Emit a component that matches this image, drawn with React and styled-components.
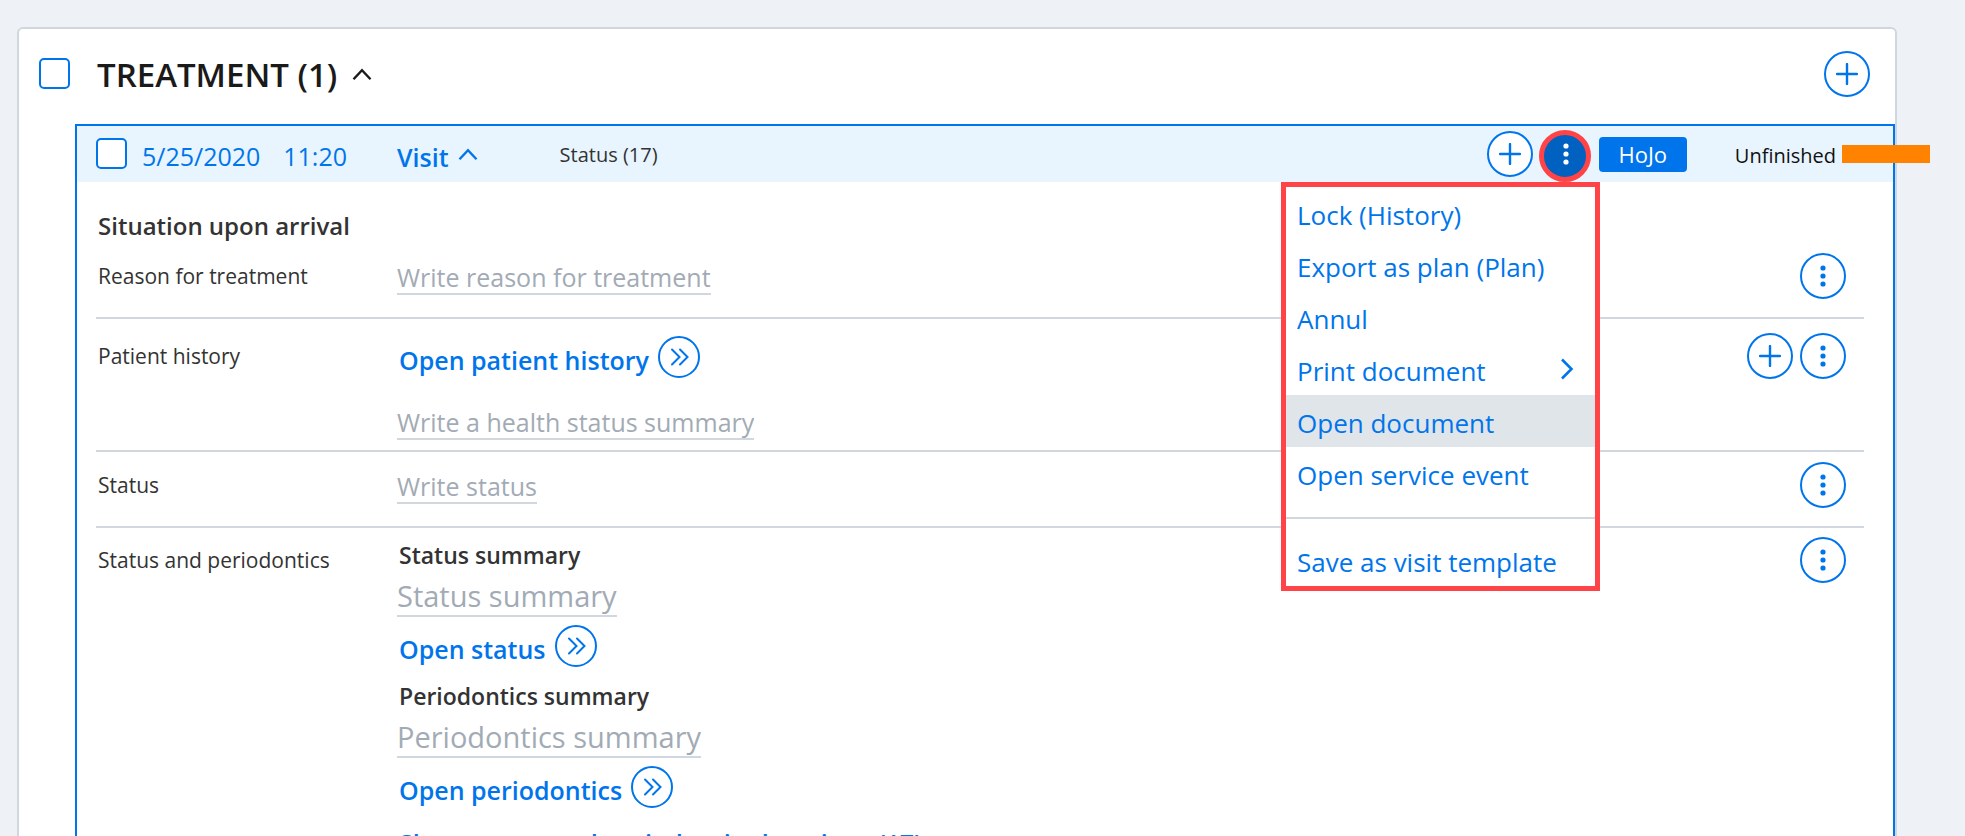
import styled, { createGlobalStyle } from 'styled-components';

const GlobalStyle = createGlobalStyle`
  * {
    box-sizing: border-box;
  }

  body {
    margin: 0;
    background: #eef1f6;
    color: #333;
    font-family: 'Segoe UI', 'Open Sans', 'Noto Sans', sans-serif;
    overflow: hidden;
  }

  button,
  input {
    font-family: inherit;
  }
`;

const Page = styled.main`
  height: 100vh;
  padding: 27px 68px 0 17px;
  overflow: hidden;
`;

const Card = styled.section`
  min-height: 900px;
  background: #fff;
  border: 2px solid #d1d7de;
  border-radius: 6px;
`;

const CardHeader = styled.header`
  display: flex;
  align-items: center;
  height: 95px;
  padding: 0 25px 5px 20px;
`;

const Checkbox = styled.input.attrs({ type: 'checkbox' })`
  appearance: none;
  flex: none;
  width: 31px;
  height: 31px;
  margin: 0 0 2px;
  border: 2px solid #0075eb;
  border-radius: 5px;
  background: #fff;
`;

const CardTitle = styled.h1`
  margin: 0 15px 0 27px;
  padding-top: 2px;
  color: #1a1a1a;
  font-size: 33px;
  font-weight: 600;
  line-height: 40px;
`;

const ToggleButton = styled.button`
  display: flex;
  align-items: center;
  gap: 9px;
  flex: none;
  padding: 0;
  border: 0;
  background: none;
  color: ${(props) => props.$color || '#0075eb'};
  font-size: 25px;
  font-weight: 600;
  line-height: 34px;
  cursor: pointer;
`;

const ToggleText = styled.span`
  padding-top: 6px;
`;

const Spacer = styled.div`
  flex: 1;
`;

const RoundButton = styled.button`
  display: flex;
  align-items: center;
  justify-content: center;
  flex: none;
  width: ${(props) => props.$size || 46}px;
  height: ${(props) => props.$size || 46}px;
  padding: 0;
  border: 2px solid #0075eb;
  border-radius: 50%;
  background: #fff;
  color: #0075eb;
  cursor: pointer;
`;

const ActiveRoundButton = styled(RoundButton)`
  align-self: flex-end;
  padding: 0 0 4px 2px;
  border: 5px solid #ff4346;
  background: #0061c1;
  color: #fff;
`;

const Visit = styled.article`
  min-height: 800px;
  margin-left: 56px;
  border: 2px solid #0075eb;
`;

const VisitHeader = styled.header`
  position: relative;
  display: flex;
  align-items: center;
  height: 56px;
  padding-left: 19px;
  background: #e8f5ff;
`;

const VisitDate = styled.div`
  display: flex;
  justify-content: space-between;
  flex: none;
  width: 205px;
  margin: 0 50px 0 15px;
  padding-top: 3px;
  color: #0075eb;
  font-size: 25px;
  line-height: 34px;
`;

const StatusCount = styled.span`
  margin-left: 82px;
  padding-top: 2px;
  font-size: 20px;
  line-height: 28px;
`;

const Actions = styled.div`
  display: flex;
  align-items: center;
  align-self: stretch;
  flex: none;
  gap: 6px;
`;

const UserTag = styled.span`
  width: 88px;
  margin: 0 42px 0 2px;
  border-radius: 4px;
  background: #0075eb;
  color: #fff;
  font-size: 22px;
  line-height: 35px;
  text-align: center;
`;

const State = styled.span`
  padding-top: 3px;
  color: #111;
  font-size: 20px;
  line-height: 28px;
`;

// The bar sticks out past the right edge of the card
const StateBar = styled.span`
  width: 88px;
  height: 18px;
  margin-right: -37px;
  background: #ff8300;
  z-index: 1;
`;

const Menu = styled.div`
  position: absolute;
  top: 56px;
  right: 293px;
  z-index: 2;
  width: 319px;
  border: 5px solid #ff4346;
  background: #fff;
`;

const MenuItem = styled.button`
  display: flex;
  align-items: center;
  justify-content: space-between;
  width: 100%;
  height: 52px;
  padding: 0 21px 0 11px;
  border: 0;
  background: ${(props) => (props.$active ? '#e0e5e9' : 'transparent')};
  color: #0075eb;
  font-size: 26px;
  line-height: 36px;
  text-align: left;
  white-space: nowrap;
  cursor: pointer;
`;

const MenuText = styled.span`
  padding-top: 3px;
`;

const MenuDivider = styled.hr`
  height: 2px;
  margin: 18px 0 15px;
  border: 0;
  background: #d1d7de;
`;

const VisitBody = styled.div`
  padding: 27px 29px 0 19px;
`;

const SectionTitle = styled.h2`
  margin: 0;
  padding-left: 2px;
  font-size: 24px;
  font-weight: 600;
  line-height: 34px;
`;

const Row = styled.div`
  display: grid;
  grid-template-columns: 301px 1fr auto;
  align-items: start;
  height: ${(props) => props.$height}px;
  padding-top: ${(props) => props.$top}px;
  border-bottom: 2px solid #d1d7de;

  &:last-child {
    border-bottom: 0;
  }
`;

const RowLabel = styled.label`
  padding: 9px 0 0 2px;
  font-size: 21px;
  line-height: 28px;
`;

const RowContent = styled.div`
  display: flex;
  flex-direction: column;
  align-items: flex-start;
  padding-top: ${(props) => props.$top}px;
`;

const RowActions = styled.div`
  display: flex;
  gap: 7px;
  padding-right: 18px;
`;

const TextField = styled.input`
  height: ${(props) => (props.$large ? 45 : 34)}px;
  margin: 0;
  padding: ${(props) => (props.$large ? '3px 0 0' : '0')};
  border: 0;
  border-bottom: 2px solid #d1d7de;
  background: none;
  font-size: ${(props) => (props.$large ? 29 : 25)}px;
  field-sizing: content;

  &::placeholder {
    color: #a2abb5;
    opacity: 1;
  }
`;

const OpenLine = styled.div`
  display: flex;
  align-items: center;
  gap: 9px;
  padding-left: 2px;
  margin: ${(props) => props.$margin || '0'};
`;

const OpenLink = styled.a`
  padding-top: 6px;
  color: #0075eb;
  font-size: 25px;
  font-weight: 600;
  line-height: 34px;
  text-decoration: none;
`;

const SummaryTitle = styled.label`
  padding-left: 2px;
  font-size: 23px;
  font-weight: 600;
  line-height: 34px;
`;

function PlusIcon() {
  return (
    <svg width="22" height="22" viewBox="0 0 22 22" aria-hidden="true">
      <path d="M11 1v20M1 11h20" stroke="currentColor" strokeWidth="2.4" strokeLinecap="round" />
    </svg>
  );
}

function DotsIcon() {
  return (
    <svg width="6" height="22" viewBox="0 0 6 22" fill="currentColor" aria-hidden="true">
      <circle cx="3" cy="3" r="2.6" />
      <circle cx="3" cy="11" r="2.6" />
      <circle cx="3" cy="19" r="2.6" />
    </svg>
  );
}

function ChevronUpIcon() {
  return (
    <svg width="20" height="13" viewBox="0 0 20 13" fill="none" aria-hidden="true">
      <path d="M1.5 11.2L10 2.2l8.500 9" stroke="currentColor" strokeWidth="2.4" />
    </svg>
  );
}

function ChevronRightIcon() {
  return (
    <svg width="14" height="22" viewBox="0 0 14 22" fill="none" aria-hidden="true">
      <path d="M2 1.500L11.500 11 2 20.500" stroke="currentColor" strokeWidth="2.6" />
    </svg>
  );
}

function DoubleChevronIcon() {
  return (
    <svg width="20" height="20" viewBox="0 0 20 20" fill="none" aria-hidden="true">
      <path
        d="M3 2.500L10.500 10 3 17.500M11 2.500L18.500 10 11 17.500"
        stroke="currentColor"
        strokeWidth="2"
        strokeLinecap="round"
      />
    </svg>
  );
}

function AddButton({ label }) {
  return (
    <RoundButton aria-label={label}>
      <PlusIcon />
    </RoundButton>
  );
}

function MoreButton() {
  return (
    <RoundButton aria-label="More">
      <DotsIcon />
    </RoundButton>
  );
}

function OpenRow({ children, margin }) {
  return (
    <OpenLine $margin={margin}>
      <OpenLink href="#">{children}</OpenLink>
      <RoundButton $size={42} aria-label={children}>
        <DoubleChevronIcon />
      </RoundButton>
    </OpenLine>
  );
}

function MenuEntry({ children, active, submenu }) {
  return (
    <MenuItem $active={active}>
      <MenuText>{children}</MenuText>
      {submenu && <ChevronRightIcon />}
    </MenuItem>
  );
}

function VisitMenu() {
  return (
    <Menu>
      <MenuEntry>Lock (History)</MenuEntry>
      <MenuEntry>Export as plan (Plan)</MenuEntry>
      <MenuEntry>Annul</MenuEntry>
      <MenuEntry submenu>Print document</MenuEntry>
      <MenuEntry active>Open document</MenuEntry>
      <MenuEntry>Open service event</MenuEntry>
      <MenuDivider />
      <MenuEntry>Save as visit template</MenuEntry>
    </Menu>
  );
}

function App() {
  return (
    <Page>
      <GlobalStyle />
      <Card>
        <CardHeader>
          <Checkbox aria-label="Select treatment" />
          <CardTitle>TREATMENT (1)</CardTitle>
          <ToggleButton $color="#1a1a1a" aria-label="Collapse treatment">
            <ChevronUpIcon />
          </ToggleButton>
          <Spacer />
          <AddButton label="Add treatment" />
        </CardHeader>

        <Visit>
          <VisitHeader>
            <Checkbox aria-label="Select visit" />
            <VisitDate>
              <span>5/25/2020</span>
              <span>11:20</span>
            </VisitDate>
            <ToggleButton>
              <ToggleText>Visit</ToggleText>
              <ChevronUpIcon />
            </ToggleButton>
            <StatusCount>Status (17)</StatusCount>
            <Spacer />
            <Actions>
              <AddButton label="Add to visit" />
              <ActiveRoundButton $size={52} aria-label="Visit menu">
                <DotsIcon />
              </ActiveRoundButton>
              <UserTag>HoJo</UserTag>
              <State>Unfinished</State>
              <StateBar />
            </Actions>
            <VisitMenu />
          </VisitHeader>

          <VisitBody>
            <SectionTitle>Situation upon arrival</SectionTitle>

            <Row $height={76} $top={10}>
              <RowLabel htmlFor="reason">Reason for treatment</RowLabel>
              <RowContent $top={8}>
                <TextField id="reason" placeholder="Write reason for treatment" />
              </RowContent>
              <RowActions>
                <MoreButton />
              </RowActions>
            </Row>

            <Row $height={133} $top={14}>
              <RowLabel htmlFor="health">Patient history</RowLabel>
              <RowContent $top={3}>
                <OpenRow margin="0 0 28px">Open patient history</OpenRow>
                <TextField id="health" placeholder="Write a health status summary" />
              </RowContent>
              <RowActions>
                <AddButton label="Add patient history" />
                <MoreButton />
              </RowActions>
            </Row>

            <Row $height={76} $top={10}>
              <RowLabel htmlFor="status">Status</RowLabel>
              <RowContent $top={8}>
                <TextField id="status" placeholder="Write status" />
              </RowContent>
              <RowActions>
                <MoreButton />
              </RowActions>
            </Row>

            <Row $height={330} $top={9}>
              <RowLabel as="span">Status and periodontics</RowLabel>
              <RowContent $top={1}>
                <SummaryTitle htmlFor="status-summary">Status summary</SummaryTitle>
                <TextField $large id="status-summary" placeholder="Status summary" />
                <OpenRow margin="8px 0 12px">Open status</OpenRow>
                <SummaryTitle htmlFor="perio-summary">Periodontics summary</SummaryTitle>
                <TextField $large id="perio-summary" placeholder="Periodontics summary" />
                <OpenRow margin="8px 0 12px">Open periodontics</OpenRow>
                <OpenLine>
                  <OpenLink href="#">Show status and periodontics locations (17)</OpenLink>
                </OpenLine>
              </RowContent>
              <RowActions>
                <MoreButton />
              </RowActions>
            </Row>
          </VisitBody>
        </Visit>
      </Card>
    </Page>
  );
}

export default App;
